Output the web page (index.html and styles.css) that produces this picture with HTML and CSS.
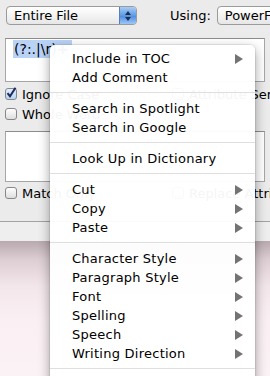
FILE: index.html
```html
<!DOCTYPE html>
<html lang="en">
<head>
  <meta charset="UTF-8">
  <title>Find &amp; Replace</title>
  <link rel="stylesheet" href="styles.css">
</head>
<body>
  <div class="window">
    <div class="toolbar">
      <div class="popup scope">
        <span class="label">Entire File</span>
        <span class="stepper"><i class="up"></i><i class="down"></i></span>
      </div>
      <span class="using">Using:</span>
      <div class="popup engine"><span class="label">PowerFind Pro</span></div>
    </div>
    <div class="field find"><span class="sel">(?:.|\r)+</span></div>
    <div class="opts">
      <div class="col">
        <label class="check"><span class="box on"><svg viewBox="0 0 12 12"><path d="M2.5 6.2 L5 9.2 L10.5 0.8" fill="none" stroke="#1d2c5a" stroke-width="2"/></svg></span>Ignore Case</label>
        <label class="check"><span class="box"></span>Whole Word</label>
      </div>
      <div class="col">
        <label class="check"><span class="box"></span>Attribute Sensitive</label>
      </div>
    </div>
    <div class="field replace"></div>
    <div class="opts second">
      <div class="col">
        <label class="check"><span class="box"></span>Match Only</label>
      </div>
      <div class="col">
        <label class="check"><span class="box"></span>Replace Attributes</label>
      </div>
    </div>
  </div>
  <div class="status"></div>
  <div class="desktop"></div>

  <ul class="menu">
    <li class="item sub">Include in TOC</li>
    <li class="item">Add Comment</li>
    <li class="sep"></li>
    <li class="item">Search in Spotlight</li>
    <li class="item">Search in Google</li>
    <li class="sep"></li>
    <li class="item">Look Up in Dictionary</li>
    <li class="sep"></li>
    <li class="item sub">Cut</li>
    <li class="item sub">Copy</li>
    <li class="item sub">Paste</li>
    <li class="sep"></li>
    <li class="item sub">Character Style</li>
    <li class="item sub">Paragraph Style</li>
    <li class="item sub">Font</li>
    <li class="item sub">Spelling</li>
    <li class="item sub">Speech</li>
    <li class="item sub">Writing Direction</li>
    <li class="sep"></li>
    <li class="item">Format</li>
  </ul>
</body>
</html>
```

FILE: styles.css
```css
* {
  box-sizing: border-box;
}

body {
  margin: 0;
  width: 270px;
  height: 376px;
  overflow: hidden;
  position: relative;
  display: flex;
  flex-direction: column;
  font-family: "DejaVu Sans", "Liberation Sans", sans-serif;
  font-size: 13px;
  color: #000;
  background: #ebebeb;
}

.window {
  height: 222px;
  flex-shrink: 0;
  border-bottom: 1px solid #a2a2a2;
  background: #ebebeb;
}

.toolbar {
  display: flex;
  align-items: flex-start;
  height: 32px;
  padding: 6px 0 0 6px;
  white-space: nowrap;
}

.popup {
  display: flex;
  align-items: center;
  height: 19px;
  padding-left: 7px;
  border: 1px solid #9b9b9b;
  border-radius: 4px;
  background: linear-gradient(#ffffff, #f1f1f1 60%, #e6e6e6);
  overflow: hidden;
  flex-shrink: 0;
}

.popup .label {
  flex: 1;
  line-height: 17px;
}

.scope {
  width: 131px;
}

.stepper {
  width: 17px;
  height: 100%;
  display: flex;
  flex-direction: column;
  align-items: center;
  justify-content: center;
  gap: 2px;
  background: linear-gradient(#a9cdf5, #5d9be6 50%, #4a8ae0 51%, #9cc8f7);
  border-left: 1px solid #5a7fb0;
}

.stepper i {
  width: 0;
  height: 0;
  border-left: 3px solid transparent;
  border-right: 3px solid transparent;
}

.stepper .up {
  border-bottom: 4px solid #1f2f4a;
}

.stepper .down {
  border-top: 4px solid #1f2f4a;
}

.using {
  margin-left: 33px;
  line-height: 19px;
}

.engine {
  width: 90px;
  margin-left: 6px;
}

.field {
  margin: 0 5px;
  background: #fff;
  border: 1px solid #a6a6a6;
  border-top-color: #8c8c8c;
}

.find {
  margin-top: 6px;
  height: 44px;
  padding-top: 1px;
}

.sel {
  display: inline-block;
  margin-left: 7px;
  padding: 0 4px 0 1px;
  height: 18px;
  line-height: 18px;
  font-size: 14px;
  background: #b9d3f7;
}

.opts {
  display: grid;
  grid-template-columns: 167px 1fr;
  padding: 2px 0 0 5px;
  white-space: nowrap;
}

.opts.second {
  padding-top: 1px;
}

.check {
  display: flex;
  align-items: center;
  gap: 5px;
  height: 20px;
}

.box {
  width: 12px;
  height: 12px;
  flex-shrink: 0;
  border: 1px solid #878787;
  border-radius: 3px;
  background: linear-gradient(#fefefe, #dedede);
}

.box.on {
  background: linear-gradient(#e4effc, #b9d4f3);
}

.box svg {
  display: block;
  width: 12px;
  height: 12px;
  margin: -2px 0 0 -1px;
}

.replace {
  margin-top: 7px;
  height: 51px;
}

.status {
  height: 19px;
  flex-shrink: 0;
  background: #eeeeee;
}

.desktop {
  flex: 1;
  background: linear-gradient(#b8a9ae, #dccdd2 18px, #f3e6ea 45px, #faf0f3 80px, #fbf2f5);
}

.menu {
  position: absolute;
  left: 50px;
  top: 45px;
  width: 205px;
  height: 345px;
  margin: 0;
  padding: 4px 0 0;
  list-style: none;
  border-radius: 5px 5px 0 0;
  background: rgba(255, 255, 255, 0.96);
  box-shadow: 0 0 0 1px rgba(0, 0, 0, 0.07), 0 4px 12px rgba(0, 0, 0, 0.38);
}

.item {
  display: flex;
  align-items: center;
  justify-content: space-between;
  height: 19px;
  padding: 0 12px 0 22px;
  letter-spacing: 0.25px;
  white-space: nowrap;
}

.item.sub::after {
  content: "";
  width: 0;
  height: 0;
  border-left: 8px solid #737373;
  border-top: 5px solid transparent;
  border-bottom: 5px solid transparent;
}

.sep {
  height: 1px;
  margin: 5px 0 6px;
  background: #dfdfdf;
}
```
